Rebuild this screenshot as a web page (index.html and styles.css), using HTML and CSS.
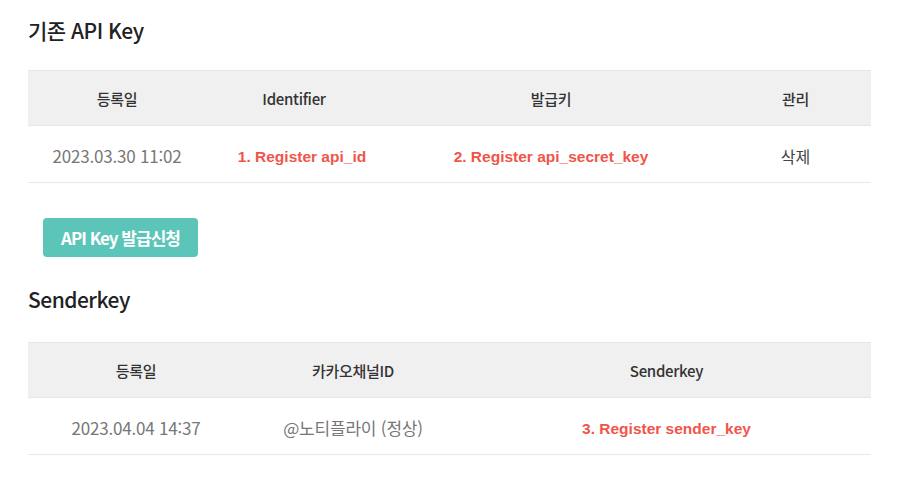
FILE: index.html
```html
<!DOCTYPE html>
<html lang="ko">
<head>
<meta charset="utf-8">
<link rel="stylesheet" href="styles.css">
</head>
<body>
<div class="page">
  <h2 class="title first">기존 API Key</h2>
  <table class="tbl t1">
    <colgroup><col class="c1"><col class="c2"><col class="c3"><col class="c4"></colgroup>
    <thead><tr><th>등록일</th><th>Identifier</th><th>발급키</th><th>관리</th></tr></thead>
    <tbody><tr><td class="date">2023.03.30 11:02</td><td class="red">1. Register api_id</td><td class="red">2. Register api_secret_key</td><td class="del">삭제</td></tr></tbody>
  </table>
  <div class="btnrow"><button class="btn">API Key 발급신청</button></div>
  <h2 class="title second">Senderkey</h2>
  <table class="tbl t2">
    <colgroup><col class="d1"><col class="d2"><col class="d3"></colgroup>
    <thead><tr><th>등록일</th><th>카카오채널ID</th><th>Senderkey</th></tr></thead>
    <tbody><tr><td class="date">2023.04.04 14:37</td><td class="date">@노티플라이 (정상)</td><td class="red">3. Register sender_key</td></tr></tbody>
  </table>
</div>
</body>
</html>
```
FILE: styles.css
```css
html, body { margin: 0; padding: 0; background: #fff; }
body { font-family: "Noto Sans CJK KR", "Noto Sans", sans-serif; color: #333; }
.page { padding: 0 29px 0 28px; }
.title { margin: 0; font-size: 21px; font-weight: 500; color: #222; letter-spacing: -0.5px; line-height: 30px; }
.title.first { padding-top: 15px; margin-bottom: 25px; }
.title.second { margin-top: 27px; margin-bottom: 28px; }
.tbl { width: 843px; border-collapse: collapse; table-layout: fixed; }
.tbl th { background: #f0f0f0; height: 54px; font-size: 15px; font-weight: 500; color: #333; border-top: 1px solid #e6e6e6; border-bottom: 1px solid #e6e6e6; padding: 0; letter-spacing: -0.3px; }
.tbl td { height: 53px; text-align: center; padding: 3px 0 0; border-bottom: 1px solid #e8e8e8; font-size: 16px; }
.c1 { width: 178px; } .c2 { width: 176px; } .c3 { width: 338px; } .c4 { width: 151px; }
.d1 { width: 216px; } .d2 { width: 218px; } .d3 { width: 409px; }
.tbl td.date { color: #777; font-weight: 400; font-size: 17px; letter-spacing: -0.2px; }
.tbl td.del { color: #444; }
.tbl td.red { color: #f0554a; font-family: "Liberation Sans", Arial, sans-serif; font-weight: 700; font-size: 15.5px; padding-top: 5px; height: 51px; }
.t1 td.red:nth-child(2) { padding-left: 16px; }
.btnrow { padding: 35px 0 0 15px; }
.btn { display: block; width: 155px; height: 39px; border: 0; border-radius: 4px; background: #5cc5b9; color: #fff; font-family: "Noto Sans CJK KR", sans-serif; font-weight: 700; font-size: 17px; letter-spacing: -1px; padding: 0; }
```
